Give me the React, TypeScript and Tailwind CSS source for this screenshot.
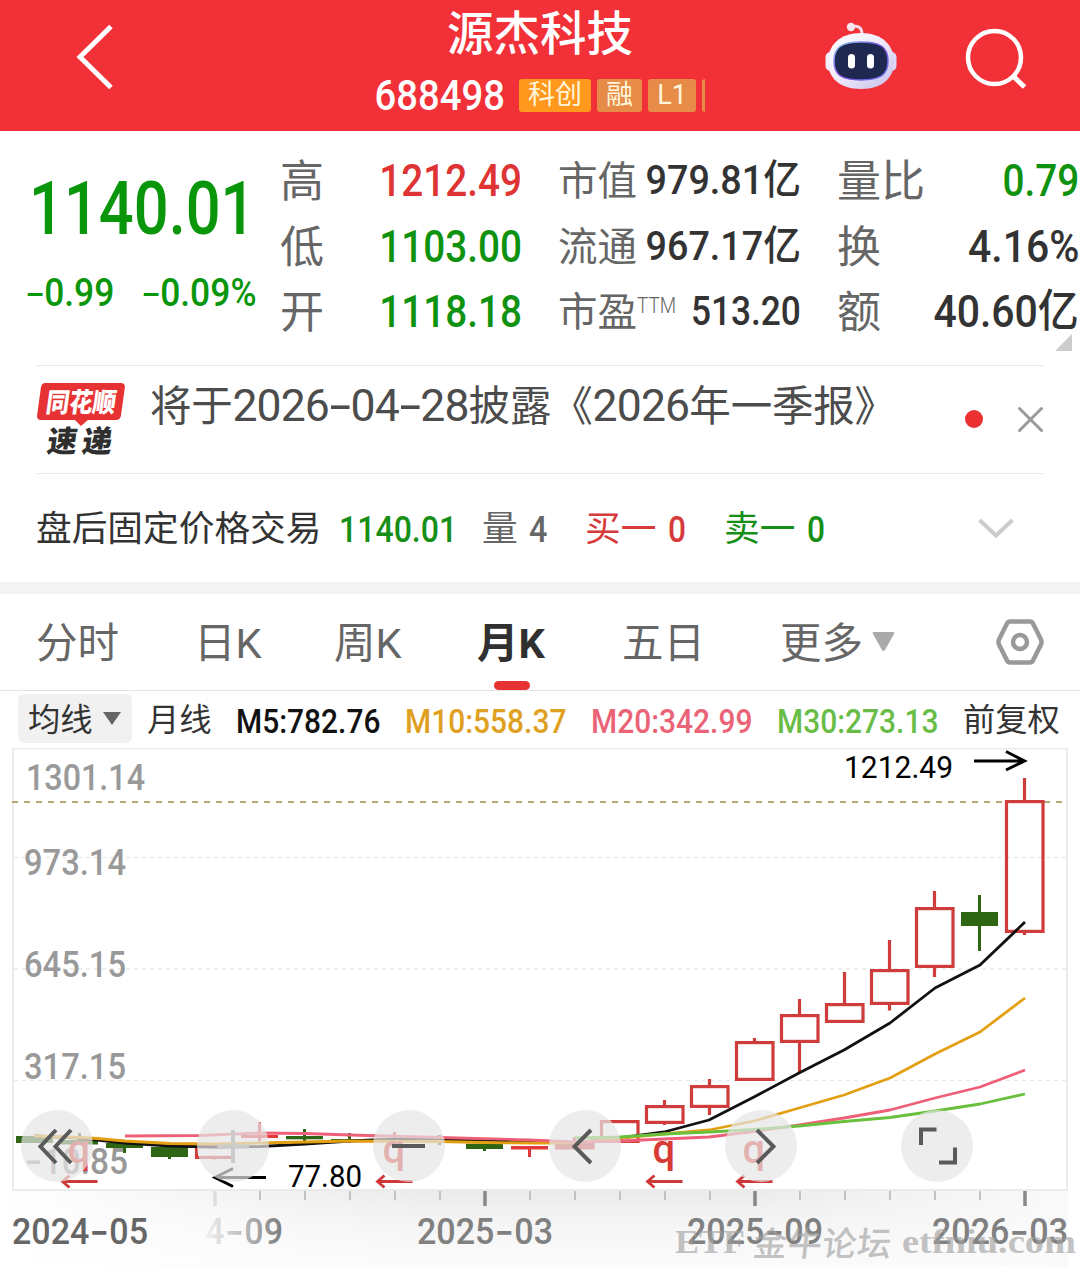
import { useState } from 'react'

type Candle = {
  x: number
  top: number
  bottom: number
  high: number
  low: number
  kind: 'hollow' | 'red' | 'green'
}

const RED = '#cf3c3c'
const GREEN = '#2f6613'

const candles: Candle[] = [
  { x: 34.5, top: 1136, bottom: 1143, high: 1136, low: 1143, kind: 'green' },
  { x: 79.5, top: 1140, bottom: 1144.5, high: 1133, low: 1145, kind: 'green' },
  { x: 124.5, top: 1143, bottom: 1148, high: 1143, low: 1153, kind: 'green' },
  { x: 169.5, top: 1147, bottom: 1157, high: 1146, low: 1159, kind: 'green' },
  { x: 214.5, top: 1145, bottom: 1159, high: 1145, low: 1159.5, kind: 'hollow' },
  { x: 259.5, top: 1135, bottom: 1138, high: 1122, low: 1141.5, kind: 'red' },
  { x: 304.5, top: 1136, bottom: 1139.3, high: 1129, low: 1141, kind: 'green' },
  { x: 349.5, top: 1139, bottom: 1142, high: 1133, low: 1143, kind: 'green' },
  { x: 394.5, top: 1138, bottom: 1141, high: 1132, low: 1142, kind: 'red' },
  { x: 439.5, top: 1139, bottom: 1142, high: 1135, low: 1145, kind: 'green' },
  { x: 484.5, top: 1143.7, bottom: 1149, high: 1143, low: 1151, kind: 'green' },
  { x: 529.5, top: 1146, bottom: 1149.5, high: 1146, low: 1157, kind: 'red' },
  { x: 574.5, top: 1143, bottom: 1149.5, high: 1137, low: 1149, kind: 'hollow' },
  { x: 619.5, top: 1120, bottom: 1143, high: 1120, low: 1143, kind: 'hollow' },
  { x: 664.5, top: 1105, bottom: 1124, high: 1100, low: 1125, kind: 'hollow' },
  { x: 709.5, top: 1085, bottom: 1108, high: 1079, low: 1115, kind: 'hollow' },
  { x: 754.5, top: 1041, bottom: 1081, high: 1038, low: 1081, kind: 'hollow' },
  { x: 799.5, top: 1014, bottom: 1043, high: 999, low: 1073, kind: 'hollow' },
  { x: 844.5, top: 1003, bottom: 1023, high: 972, low: 1023, kind: 'hollow' },
  { x: 889.5, top: 969, bottom: 1005, high: 940, low: 1010.5, kind: 'hollow' },
  { x: 934.5, top: 907, bottom: 968, high: 891, low: 977, kind: 'hollow' },
  { x: 979.5, top: 912, bottom: 926, high: 895, low: 951, kind: 'green' },
  { x: 1024.5, top: 800, bottom: 933, high: 778, low: 935, kind: 'hollow' },
]

const averages = [
  {
    color: '#111111',
    points:
      '34,1136 80,1138 97,1140 125,1143 170,1146 215,1147 260,1146.5 305,1144 350,1141 395,1139 440,1139.5 485,1140.5 530,1142 575,1143 620,1138 664,1132 709,1120 754,1097 799,1073 844,1050 890,1023 935,988 980,965 1025,922',
  },
  {
    color: '#e39f12',
    points:
      '34,1136 80,1137.5 97,1138.5 125,1141 170,1143.5 215,1144 260,1143 305,1142 350,1141 395,1141.5 440,1141.5 485,1142.5 530,1143 575,1143 620,1138 664,1134 709,1130 754,1121 799,1108 844,1095 890,1078 935,1054 980,1032 1025,998',
  },
  {
    color: '#ee6077',
    points:
      '125,1136 200,1135.5 260,1133 305,1133.5 350,1135 440,1137.5 530,1140 575,1142 620,1141 664,1139 709,1137 754,1131.5 799,1125 844,1118 890,1110 935,1098 980,1087 1025,1070',
  },
  {
    color: '#69c03c',
    points:
      '575,1138 620,1137 664,1134 709,1132 754,1129.5 799,1126 844,1121.5 890,1117.5 935,1111 980,1104 1025,1094',
  },
]

const priceLabels = [
  { text: '1301.14', x: 26, y: 790, w: 119 },
  { text: '973.14', x: 24, y: 875, w: 102 },
  { text: '645.15', x: 24, y: 977, w: 102 },
  { text: '317.15', x: 24, y: 1079, w: 102 },
]

const dates = [
  { year: '2024', month: '05', x: 12, fill: '#666666' },
  { year: '2024', month: '09', x: 147, fill: 'url(#dateFade)' },
  { year: '2025', month: '03', x: 417, fill: '#808080' },
  { year: '2025', month: '09', x: 687, fill: '#808080' },
  { year: '2026', month: '03', x: 932, fill: '#808080' },
]

const tabs = [
  { label: '分时', width: 'w-[158px]' },
  { label: '日K', width: 'w-[140px]' },
  { label: '周K', width: 'w-[143px]' },
  { label: '月K', width: 'w-[145px]' },
  { label: '五日', width: 'w-[158px]' },
]

function Hyphen() {
  return <span className="inline-block scale-x-130 px-[1px] font-['Inter'] font-normal">-</span>
}

function Robot() {
  return (
    <svg className="h-[72px] w-[76px]" viewBox="823 20 76 72" fill="none">
      <defs>
        <linearGradient id="head" x1="0" y1="0" x2="1" y2="1">
          <stop offset="0" stopColor="#ffffff" />
          <stop offset="0.5" stopColor="#efeafb" />
          <stop offset="1" stopColor="#c3bdea" />
        </linearGradient>
        <linearGradient id="rim" x1="0" y1="0" x2="1" y2="1">
          <stop offset="0" stopColor="#8fd0f5" />
          <stop offset="0.5" stopColor="#7a4be0" />
          <stop offset="1" stopColor="#6a7cf0" />
        </linearGradient>
      </defs>
      <path d="M851 27c6-2 11 0 11 7" stroke="#f3dcea" strokeWidth="3" />
      <circle cx="851" cy="27" r="4.2" fill="#f7e6f0" />
      <rect x="825.500" y="52" width="12" height="19" rx="5" fill="#efedfb" />
      <rect x="884.500" y="52" width="12" height="19" rx="5" fill="#ddd8f5" />
      <path
        d="M861 33c21 0 33 12 33 29 0 16-12 27-33 27s-33-11-33-27c0-17 12-29 33-29z"
        fill="url(#head)"
      />
      <path
        d="M861 42c19 0 27 5 27 19s-8 19-27 19-27-5-27-19 8-19 27-19z"
        fill="#1e2850"
        stroke="url(#rim)"
        strokeWidth="1.5"
      />
      <rect x="848" y="54" width="7" height="14.5" rx="3.5" fill="#fff" />
      <rect x="867" y="54" width="7" height="14.5" rx="3.5" fill="#fff" />
    </svg>
  )
}

function Header() {
  return (
    <header className="flex h-[131px] bg-[#f23037]">
      <div className="w-[370px] pt-[22px] pl-[74px]">
        <svg className="h-[70px] w-[42px]" viewBox="0 0 42 70" fill="none">
          <path d="M37 4.500L6 35l31 30.500" stroke="#fff" strokeWidth="5" />
        </svg>
      </div>
      <div className="flex w-[340px] flex-col items-center">
        <h1 className="mt-[10px] text-[46.500px] leading-[48px] font-medium text-white">源杰科技</h1>
        <div className="mt-[19px] flex h-[36px] w-full items-center">
          <span className="w-[149px] origin-left scale-x-[0.91] pt-[2px] pl-[5px] text-[42px] leading-none font-medium text-white">
            688498
          </span>
          <div className="flex h-[33px] gap-[6px] text-[27px] leading-[33px] text-[#fff6dc]">
            <span className="w-[72px] rounded-[3px] bg-[#ff981c] text-center">科创</span>
            <span className="w-[45px] rounded-[3px] bg-[#e68c48] text-center">融</span>
            <span className="w-[48px] rounded-[3px] bg-[#e68c48] text-center">L1</span>
            <span className="w-[3px] rounded-l-[3px] bg-[#e68c48]" />
          </div>
        </div>
      </div>
      <div className="flex pt-[20px] pl-[113px]">
        <Robot />
        <svg className="mt-[4px] ml-[63px] size-[68px]" viewBox="962 24 68 68" fill="none">
          <circle cx="994.500" cy="57.500" r="26.500" stroke="#fff" strokeWidth="4.500" />
          <path d="M1013 76l11.500 11" stroke="#fff" strokeWidth="5" />
        </svg>
      </div>
    </header>
  )
}

function Quote() {
  return (
    <section className="relative flex h-[234px] pt-[17px] whitespace-nowrap text-[#333]">
      <div className="w-[280px] font-medium text-[#0a960a]">
        <div className="mt-[24px] ml-[29px] origin-left scale-x-[0.83] text-[74px] leading-[74px]">1140.01</div>
        <div className="mt-[26px] flex text-[38.500px] leading-[40px]">
          <span className="ml-[26px] w-[116px] origin-left scale-x-[0.92]"><Hyphen />0.99</span>
          <span className="origin-left scale-x-[0.92]"><Hyphen />0.09%</span>
        </div>
      </div>
      <div className="w-[242px] text-[44px] leading-[65.500px]">
        {[
          ['高', '1212.49'],
          ['低', '1103.00'],
          ['开', '1118.18'],
        ].map(([label, value], i) => (
          <div key={label} className="flex h-[65.500px] justify-between">
            <span className="pt-[2px] text-[#666]">{label}</span>
            <span
              className={
                i === 0
                  ? 'origin-right scale-x-[0.86] text-[45px] font-medium text-[#df3434]'
                  : 'origin-right scale-x-[0.86] text-[45px] font-medium text-[#0f920f]'
              }
            >
              {value}
            </span>
          </div>
        ))}
      </div>
      <div className="ml-[36px] w-[243px] text-[39.500px] leading-[65.500px]">
        <div className="flex h-[65.500px] justify-between">
          <span className="pt-[1px] text-[#666]">市值</span>
          <span className="-ml-[20px] origin-right scale-x-[0.92] text-[41px] font-medium">979.81亿</span>
        </div>
        <div className="flex h-[65.500px] justify-between">
          <span className="pt-[1px] text-[#666]">流通</span>
          <span className="-ml-[20px] origin-right scale-x-[0.92] text-[41px] font-medium">967.17亿</span>
        </div>
        <div className="flex h-[65.500px] justify-between">
          <span className="flex pt-[1px] text-[#666]">
            市盈<span className="-mt-[7px] w-[30px] origin-left scale-x-[0.88] text-[21.500px] font-light">TTM</span>
          </span>
          <span className="origin-right scale-x-[0.86] text-[41px] font-medium">513.20</span>
        </div>
      </div>
      <div className="ml-[36px] w-[242px] text-[44px] leading-[65.500px]">
        <div className="flex h-[65.500px] justify-between">
          <span className="pt-[2px] text-[#666]">量比</span>
          <span className="origin-right scale-x-[0.86] text-[45px] font-medium text-[#0f920f]">0.79</span>
        </div>
        <div className="flex h-[65.500px] justify-between">
          <span className="pt-[2px] text-[#666]">换</span>
          <span className="origin-right scale-x-[0.91] text-[45px] font-medium">4.16%</span>
        </div>
        <div className="flex h-[65.500px] justify-between">
          <span className="pt-[2px] text-[#666]">额</span>
          <span className="origin-right scale-x-[0.91] text-[45px] font-medium">40.60亿</span>
        </div>
      </div>
      <svg className="absolute top-[203px] left-[1055px] size-[17px]" viewBox="0 0 17 17">
        <path d="M17 0v17H0z" fill="#cccccc" />
      </svg>
    </section>
  )
}

function News() {
  return (
    <section className="mx-[36px] flex h-[109px] border-y border-[#e9e9e9]">
      <svg className="mt-[14px] h-[80px] w-[92px]" viewBox="36 380 92 80">
        <path d="M45 383h76q4 0 4 4l-4 29q-1 4-5 4H88l-7 6-6-6H41q-4 0-4-4l4-29q1-4 4-4z" fill="#e63232" />
        <g fontFamily="'Noto Sans CJK SC', sans-serif" fontWeight="900">
          <text x="0" y="0" fontSize="27" fill="#fff" textLength="70" lengthAdjust="spacingAndGlyphs" transform="translate(45 412) skewX(-8)">
            同花顺
          </text>
          <text x="0" y="0" fontSize="30" fill="#2f2f2f" textLength="30" lengthAdjust="spacingAndGlyphs" transform="translate(46 452) skewX(-8)">
            速
          </text>
          <text x="0" y="0" fontSize="30" fill="#2f2f2f" textLength="30" lengthAdjust="spacingAndGlyphs" transform="translate(81 452) skewX(-8)">
            递
          </text>
        </g>
      </svg>
      <p className="mt-[13px] ml-[22px] w-[808px] text-[41.500px] leading-[52px] tracking-[-0.2px] whitespace-nowrap text-[#4c4c4c]">
        将于<span className="text-[44.500px] tracking-[-0.9px]">2026<Hyphen />04<Hyphen />28</span>披露《
        <span className="text-[44.500px] tracking-[-0.8px]">2026</span>年一季报》
      </p>
      <span className="mt-[44px] ml-[8px] size-[18px] shrink-0 rounded-full bg-[#ea3030]" />
      <svg className="mt-[40px] ml-[33px] size-[28px] shrink-0" viewBox="0 0 28 28" fill="none">
        <path d="M3.500 2.500l22 22M25.500 2.500l-22 22" stroke="#999" strokeWidth="3" strokeLinecap="round" />
      </svg>
    </section>
  )
}

function AfterHours() {
  return (
    <section className="flex h-[108px] items-center pt-[4px] pl-[36px] text-[35.700px] leading-none text-[#333]">
      <span className="w-[303px]">盘后固定价格交易</span>
      <span className="w-[143px] origin-left scale-x-[0.89] text-[36px] font-medium text-[#168f16]">1140.01</span>
      <span className="w-[47px] text-[#666]">量</span>
      <span className="w-[56px] origin-left scale-x-[0.9] text-[36px] font-medium text-[#666]">4</span>
      <span className="w-[83px] text-[#d63a3a]">买一</span>
      <span className="w-[56px] origin-left scale-x-[0.88] text-[36px] font-medium text-[#d63a3a]">0</span>
      <span className="w-[83px] text-[#168f16]">卖一</span>
      <span className="w-[169px] origin-left scale-x-[0.88] text-[36px] font-medium text-[#168f16]">0</span>
      <svg className="mt-[-4px] h-[24px] w-[40px]" viewBox="0 0 40 24" fill="none">
        <path d="M3.500 4L20 19.500 36.500 4" stroke="#cccccc" strokeWidth="4" />
      </svg>
    </section>
  )
}

function Tabs() {
  const [active, setActive] = useState('月K')

  return (
    <nav className="flex h-[97px] border-b border-[#e4e4e4] pl-[36px] text-[41.500px] text-[#666]">
      {tabs.map((tab) => (
        <div key={tab.label} className={tab.width}>
          <button
            onClick={() => setActive(tab.label)}
            className={
              tab.label === active
                ? 'relative h-[96px] pt-[1px] leading-[98px] font-bold text-[#303030]'
                : 'relative h-[96px] pt-[1px] leading-[98px]'
            }
          >
            {tab.label}
            {tab.label === active && (
              <span className="absolute bottom-0 left-[17px] h-[9px] w-[36px] rounded-full bg-[#e63232]" />
            )}
          </button>
        </div>
      ))}
      <div className="flex w-[213px] items-center leading-[98px]">
        <span className="pt-[4px]">更多</span>
        <svg className="ml-[9px] h-[20px] w-[23px]" viewBox="0 0 23 20">
          <path d="M2 0h19q2 0 1 2l-9 16q-1.500 2-3 0L1 2Q0 0 2 0z" fill="#aaaaaa" />
        </svg>
      </div>
      <svg className="mt-[22px] h-[52px] w-[54px]" viewBox="993 616 54 52" fill="none" stroke="#999">
        <path
          d="M1010 621.500h20q2 0 3 2l8 16q1 2.500 0 5l-8 16q-1 2-3 2h-20q-2 0-3-2l-8-16q-1-2.500 0-5l8-16q1-2 3-2z"
          strokeWidth="4.500"
        />
        <circle cx="1020" cy="642" r="7" strokeWidth="4.500" />
      </svg>
    </nav>
  )
}

function Averages() {
  return (
    <div className="flex h-[57px] items-center pt-[2px] pl-[18px] text-[32.300px] leading-none whitespace-nowrap text-[#333]">
      <div className="-mt-[5px] flex h-[49px] w-[114px] items-center rounded-[6px] bg-[#f1f1f1] pl-[10px]">
        <span className="pt-[4px]">均线</span>
        <svg className="ml-[10px] h-[13px] w-[18px]" viewBox="0 0 18 13">
          <path d="M0 0h18L9 13z" fill="#666" />
        </svg>
      </div>
      <span className="ml-[15px] w-[89px]">月线</span>
      <span className="w-[169px] origin-left scale-x-[0.88] text-[34px] font-medium text-[#111]">M5:782.76</span>
      <span className="w-[186px] origin-left scale-x-[0.88] text-[34px] font-medium text-[#dfa022]">M10:558.37</span>
      <span className="w-[186px] origin-left scale-x-[0.88] text-[34px] font-medium text-[#ea6377]">M20:342.99</span>
      <span className="w-[186px] origin-left scale-x-[0.88] text-[34px] font-medium text-[#69bd47]">M30:273.13</span>
      <span>前复权</span>
    </div>
  )
}

function CandleShape({ x, top, bottom, high, low, kind }: Candle) {
  if (kind === 'hollow') {
    return (
      <g stroke={RED} strokeWidth="3.200" fill="none">
        <rect x={x - 18} y={top + 1.6} width="36.500" height={bottom - top - 3.2} />
        <path d={`M${x} ${high}V${top}M${x} ${bottom}V${low}`} />
      </g>
    )
  }
  const fill = kind === 'green' ? GREEN : '#e23a3a'
  return (
    <g fill={fill}>
      <rect x={x - 18.5} y={top} width="37" height={bottom - top} />
      <rect x={x - 1.5} y={high} width="3" height={low - high} />
    </g>
  )
}

function Chart() {
  return (
    <svg className="block h-[519px] w-[1080px]" viewBox="0 748 1080 519" fill="none" fontFamily="Roboto, sans-serif">
      <defs>
        <linearGradient id="axis" x1="0" y1="0" x2="0" y2="1">
          <stop offset="0" stopColor="#ebebeb" />
          <stop offset="0.5" stopColor="#f6f6f6" />
          <stop offset="1" stopColor="#fbfbfb" />
        </linearGradient>
        <linearGradient id="axisFade" x1="0" y1="0" x2="1" y2="0">
          <stop offset="0" stopColor="#fff" />
          <stop offset="0.4" stopColor="#fff" stopOpacity="0" />
          <stop offset="0.7" stopColor="#fafafa" stopOpacity="0" />
          <stop offset="1" stopColor="#fafafa" />
        </linearGradient>
        <linearGradient id="dateFade" gradientUnits="userSpaceOnUse" x1="206" y1="0" x2="280" y2="0">
          <stop offset="0" stopColor="#909090" stopOpacity="0.100" />
          <stop offset="1" stopColor="#808080" />
        </linearGradient>
        <clipPath id="dateClip">
          <rect x="204" y="1210" width="90" height="45" />
        </clipPath>
      </defs>

      <rect x="0" y="1191" width="1068" height="76" fill="url(#axis)" />
      <rect x="0" y="1191" width="1068" height="76" fill="url(#axisFade)" />
      <rect x="13" y="748.500" width="1054" height="441.500" fill="#fff" stroke="#ebebeb" strokeWidth="2" />
      <path d="M14 857.500H1066M14 969H1066M14 1080.500H1066" stroke="#e9e9e9" strokeWidth="1.700" strokeDasharray="4 4" />
      <path d="M12 802H1064" stroke="#b8a878" strokeWidth="2" strokeDasharray="6 6" />

      <g fill="#999" fontSize="36" fontWeight="500">
        {priceLabels.map((l) => (
          <text key={l.text} x={l.x} y={l.y} textLength={l.w} lengthAdjust="spacingAndGlyphs">
            {l.text}
          </text>
        ))}
        <text x="24" y="1174" textLength="104" lengthAdjust="spacingAndGlyphs">
          <tspan fontFamily="Inter" fontWeight="400" fontSize="44" dy="2">-</tspan>
          <tspan dy="-2">10.85</tspan>
        </text>
      </g>

      {candles.map((c) => (
        <CandleShape key={c.x} {...c} />
      ))}
      {averages.map((a) => (
        <polyline key={a.color} points={a.points} stroke={a.color} strokeWidth="2.800" strokeLinejoin="round" />
      ))}

      {/* 除权标记 */}
      {[79.5, 394.5, 664.5, 754.5].map((x) => (
        <g key={x}>
          <text x={x - 12} y="1163" fontSize="40" fontWeight="500" fill="#d83a34">q</text>
          <path d={`M${x + 18} 1181.500H${x - 16}M${x - 10} 1175.500l-7 6 7 6`} stroke="#cf3838" strokeWidth="2.800" />
        </g>
      ))}

      <g fill="#000" stroke="none" fontSize="31">
        <text x="844" y="778" textLength="109" lengthAdjust="spacingAndGlyphs">1212.49</text>
        <text x="288" y="1187" textLength="74" lengthAdjust="spacingAndGlyphs">77.80</text>
      </g>
      <path d="M974 761h50M1006 751.500l18.500 9.500-18.500 9" stroke="#000" strokeWidth="3" />
      <path d="M266 1177.500h-50M233 1168.500l-18 9 18 9" stroke="#000" strokeWidth="3" />

      {/* 时间轴 */}
      {Array.from({ length: 17 }, (_, i) => 259.5 + i * 45)
        .filter((x) => x !== 484.5 && x !== 754.5)
        .map((x) => (
          <path key={x} d={`M${x + 0.5} 1191v9`} stroke="#c2c2c2" strokeWidth="2" />
        ))}
      <path d="M215 1191v15" stroke="#dedede" strokeWidth="3.500" />
      <path d="M485 1191v15M755 1191v15M1025 1191v15" stroke="#888" strokeWidth="3.500" />
      {dates.map((d) => (
        <g key={d.x} clipPath={d.x === 147 ? 'url(#dateClip)' : undefined}>
          <text x={d.x} y="1244" fontSize="36" fontWeight="500" fill={d.fill} textLength="136" lengthAdjust="spacingAndGlyphs">
            {d.year}
            <tspan fontFamily="Inter" fontWeight="400" fontSize="46" dy="3">-</tspan>
            <tspan dy="-3">{d.month}</tspan>
          </text>
        </g>
      ))}

      <g fill="#a0a0a0" fillOpacity="0.650" fontFamily="'Liberation Serif', serif" fontWeight="700">
        <text x="675" y="1253" fontSize="33" textLength="70" lengthAdjust="spacingAndGlyphs">ETF</text>
        <text x="0" y="0" fontSize="34" fontWeight="500" textLength="138" transform="translate(752 1256) skewX(-6)" fontFamily="'Noto Sans CJK SC', sans-serif">
          金牛论坛
        </text>
        <text x="902" y="1253" fontSize="33" textLength="174" lengthAdjust="spacingAndGlyphs">etfniu.com</text>
      </g>
    </svg>
  )
}

const controls = [
  { name: 'first', d: 'M35 20L19.500 36.500 35 53M50 20L34.500 36.500 50 53', color: '#5a5a5a' },
  { name: 'zoom-in', d: 'M20 36.500h32M36 20v33', color: '#cbcbcb' },
  { name: 'zoom-out', d: 'M19 36h33', color: '#5a5a5a' },
  { name: 'prev', d: 'M42 20L25.500 36.500 42 53', color: '#5a5a5a' },
  { name: 'next', d: 'M32 20l16.500 16.500L32 53', color: '#5a5a5a' },
  { name: 'expand', d: 'M20 35V19.500h15.500M54 37.500v15H38', color: '#5a5a5a' },
]

function Controls() {
  return (
    <div className="absolute top-[362px] left-[21px] flex gap-[104px]">
      {controls.map((c) => (
        <button key={c.name} aria-label={c.name} className="size-[72px] rounded-full bg-[#e5e5e5]/70">
          <svg viewBox="0 0 72 72" fill="none" stroke={c.color} strokeWidth="4">
            <path d={c.d} />
          </svg>
        </button>
      ))}
    </div>
  )
}

export default function App() {
  return (
    <div className="h-[1267px] w-[1080px] overflow-hidden bg-white font-['Roboto','Noto_Sans_CJK_SC',sans-serif]">
      <Header />
      <Quote />
      <News />
      <AfterHours />
      <div className="h-[12px] bg-[#f4f4f4]" />
      <Tabs />
      <Averages />
      <div className="relative">
        <Chart />
        <Controls />
      </div>
    </div>
  )
}
